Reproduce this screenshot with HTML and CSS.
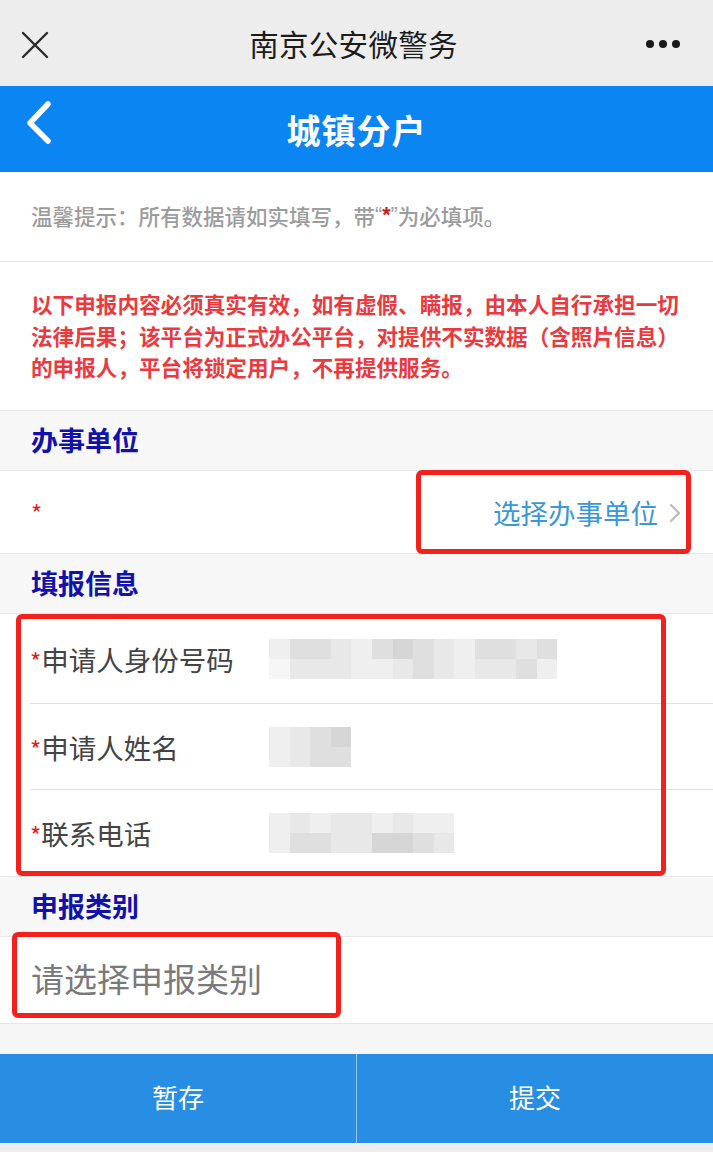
FILE: index.html
```html
<!DOCTYPE html>
<html lang="zh-CN">
<head>
<meta charset="utf-8">
<title>城镇分户</title>
<link rel="stylesheet" href="styles.css">
</head>
<body>
<div class="page">
  <header class="wx-bar">
    <svg class="wx-close" width="28" height="28" viewBox="0 0 28 28"><path d="M2 2 L26 26 M26 2 L2 26" stroke="#2a2a2a" stroke-width="2.4" stroke-linecap="round" fill="none"/></svg>
    <div class="wx-title">南京公安微警务</div>
    <div class="wx-more"><span></span><span></span><span></span></div>
  </header>

  <header class="app-bar">
    <svg class="app-back" width="32" height="48" viewBox="0 0 32 48"><path d="M25 6 L7 25 L25 43" stroke="#fff" stroke-width="5.5" stroke-linecap="round" stroke-linejoin="round" fill="none"/></svg>
    <h1 class="app-title">城镇分户</h1>
  </header>

  <section class="tip">温馨提示：所有数据请如实填写，带<span class="q">“</span><span class="req">*</span><span class="q">”</span>为必填项。</section>

  <section class="warning">以下申报内容必须真实有效，如有虚假、瞒报，由本人自行承担一切法律后果；该平台为正式办公平台，对提供不实数据（含照片信息）的申报人，平台将锁定用户，不再提供服务。</section>

  <div class="section-head">办事单位</div>
  <div class="unit-row">
    <span class="req star">*</span>
    <span class="unit-pick">选择办事单位<svg class="chev" width="14" height="20" viewBox="0 0 14 20"><path d="M3 2 L11 10 L3 18" stroke="#bdbdbd" stroke-width="2.4" fill="none" stroke-linecap="round" stroke-linejoin="round"/></svg></span>
    <div class="mark mark-unit"></div>
  </div>

  <div class="section-head">填报信息</div>
  <div class="fields">
    <div class="field f1">
      <span class="label"><span class="req">*</span>申请人身份号码</span>
      <div class="mosaic m14">
        <i class="g1"></i><i class="g3"></i><i class="g3"></i><i class="g2"></i><i class="g1"></i><i class="g3"></i><i class="g4"></i><i class="g3"></i><i class="g2"></i><i class="g1"></i><i class="g3"></i><i class="g3"></i><i class="g2"></i><i class="g3"></i>
        <i class="g0"></i><i class="g2"></i><i class="g2"></i><i class="g2"></i><i class="g1"></i><i class="g1"></i><i class="g2"></i><i class="g3"></i><i class="g2"></i><i class="g1"></i><i class="g2"></i><i class="g2"></i><i class="g3"></i><i class="g1"></i>
      </div>
    </div>
    <div class="field f2">
      <span class="label"><span class="req">*</span>申请人姓名</span>
      <div class="mosaic m4">
        <i class="g1"></i><i class="g2"></i><i class="g3"></i><i class="g4"></i>
        <i class="g1"></i><i class="g2"></i><i class="g3"></i><i class="g3"></i>
      </div>
    </div>
    <div class="field f3">
      <span class="label"><span class="req">*</span>联系电话</span>
      <div class="mosaic m9">
        <i class="g1"></i><i class="g2"></i><i class="g1"></i><i class="g2"></i><i class="g2"></i><i class="g1"></i><i class="g2"></i><i class="g1"></i><i class="g1"></i>
        <i class="g1"></i><i class="g3"></i><i class="g3"></i><i class="g2"></i><i class="g2"></i><i class="g4"></i><i class="g4"></i><i class="g3"></i><i class="g2"></i>
      </div>
    </div>
    <div class="mark mark-fields"></div>
  </div>

  <div class="section-head">申报类别</div>
  <div class="select-row">
    <span class="placeholder">请选择申报类别</span>
    <div class="mark mark-select"></div>
  </div>

  <div class="spacer"></div>

  <footer class="actions">
    <button class="btn">暂存</button>
    <button class="btn">提交</button>
  </footer>
  <div class="bottom-strip"></div>
</div>
</body>
</html>
```

FILE: styles.css
```css
* { box-sizing: border-box; }
html, body { margin: 0; padding: 0; }
body {
  background: #ffffff;
  font-family: "Noto Sans CJK SC", "Noto Sans", "Liberation Sans", sans-serif;
  color: #333;
}
.page { width: 713px; min-height: 1152px; display: flex; flex-direction: column; }

.wx-bar {
  height: 86px;
  background: #ededed;
  display: flex;
  align-items: center;
  justify-content: center;
  position: relative;
}
.wx-close { position: absolute; left: 21px; top: 31px; }
.wx-title { font-size: 29.5px; color: #1c1c1c; letter-spacing: 0.3px; padding-right: 6px; }
.wx-more { position: absolute; right: 33px; top: 40px; display: flex; gap: 5px; }
.wx-more span { width: 8px; height: 8px; border-radius: 50%; background: #1a1a1a; }

.app-bar {
  height: 86px;
  background: #0a85f2;
  display: flex;
  align-items: center;
  justify-content: center;
  position: relative;
}
.app-back { position: absolute; left: 23px; top: 12px; }
.app-title { margin: 0; font-size: 34px; font-weight: 700; color: #fff; letter-spacing: 1px; }

.req { color: #e02020; }

.tip {
  height: 90px;
  padding: 0 31px 2px;
  display: flex;
  align-items: center;
  font-size: 21.5px;
  font-weight: 500;
  color: #9c9c9c;
  border-bottom: 1px solid #e3e3e3;
}
.tip .q { font-family: "Liberation Sans", sans-serif; }
.tip .req { font-weight: 700; color: #c81818; font-family: "Liberation Sans", sans-serif; }

.warning {
  height: 148px;
  padding: 26px 25px 0 31px;
  font-size: 21.6px;
  line-height: 31.5px;
  font-weight: 700;
  color: #ea3a3f;
}

.section-head {
  height: 61px;
  background: #f7f7f7;
  border-top: 1px solid #e8e8e8;
  border-bottom: 1px solid #e8e8e8;
  padding: 0 31px 2px;
  display: flex;
  align-items: center;
  font-size: 27px;
  font-weight: 700;
  color: #1212aa;
}

.unit-row {
  height: 82px;
  position: relative;
  display: flex;
  align-items: center;
  justify-content: space-between;
  padding: 0 31px 0 31px;
}
.unit-row .star { font-size: 24px; }
.unit-pick {
  display: flex;
  align-items: center;
  gap: 10px;
  font-size: 27.5px;
  color: #3a98d8;
}
.chev { margin-top: 2px; }

.mark {
  position: absolute;
  border: 5px solid #f2211c;
  border-radius: 6px;
  pointer-events: none;
}
.mark-unit { left: 416px; top: -1px; width: 275px; height: 84px; }

.fields { position: relative; }
.field {
  margin-left: 30px;
  display: flex;
  align-items: center;
  border-bottom: 1px solid #e2e2e2;
}
.field.f1 { height: 90px; }
.field.f2 { height: 86px; }
.field.f3 { height: 86px; border-bottom: none; }
.label { width: 239px; font-size: 27.5px; color: #444; }
.label .req { font-size: 24px; }

.mosaic { display: grid; grid-auto-rows: 20px; }
.mosaic.m14 { grid-template-columns: repeat(14, 20.6px); }
.mosaic.m4 { grid-template-columns: repeat(4, 20.5px); }
.mosaic.m9 { grid-template-columns: repeat(9, 20.6px); }
.mosaic i { display: block; }
.g0 { background: #f6f6f6; }
.g1 { background: #efefef; }
.g2 { background: #e8e8e8; }
.g3 { background: #dfdfdf; }
.g4 { background: #d6d6d6; }

.mark-fields { left: 16px; top: 0; width: 650px; height: 262px; }

.select-row {
  height: 86px;
  position: relative;
  display: flex;
  align-items: center;
  padding: 0 31px 4px;
}
.placeholder { font-size: 33px; color: #7a7a7a; }
.mark-select { left: 12px; top: -5px; width: 329px; height: 86px; }

.spacer { height: 31px; background: #f6f6f6; border-top: 1px solid #e5e5e5; }

.actions { display: flex; height: 89px; }
.btn {
  flex: 1;
  border: none;
  margin: 0;
  background: #278ee3;
  color: #fff;
  font-family: inherit;
  font-size: 26px;
  padding: 0 0 4px;
}
.btn + .btn { border-left: 1px solid #9ccaf2; }
.bottom-strip { flex: 1; background: #ededed; }
```
